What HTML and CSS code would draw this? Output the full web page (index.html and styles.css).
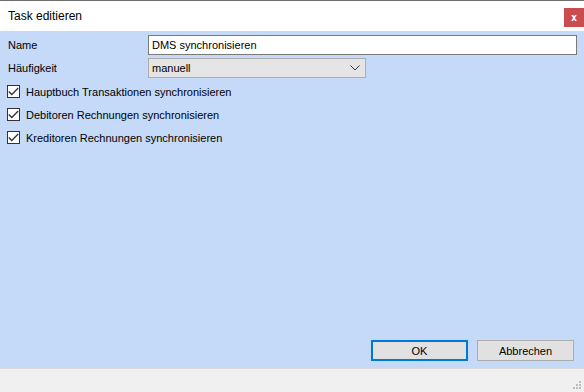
FILE: index.html
```html
<!DOCTYPE html>
<html lang="de">
<head>
    <meta charset="UTF-8">
    <title>Task editieren</title>
    <link rel="stylesheet" href="styles.css">
</head>
<body>
    <div class="window">
        <div class="titlebar">
            <span class="title">Task editieren</span>
            <button class="close">x</button>
        </div>
        <div class="content">
            <div class="row">
                <label class="label" for="name">Name</label>
                <input class="textbox" type="text" id="name" value="DMS synchronisieren">
            </div>
            <div class="row">
                <label class="label" for="freq">Häufigkeit</label>
                <div class="combo" id="freq">
                    <span>manuell</span>
                    <svg class="chevron" width="10" height="6" viewBox="0 0 10 6"><path d="M0.5 0.5 L5 5 L9.5 0.5" fill="none" stroke="#333" stroke-width="1"/></svg>
                </div>
            </div>
            <div class="check-row">
                <span class="checkbox"><svg width="11" height="9" viewBox="0 0 11 9"><path d="M0.8 4.5 L3.8 7.5 L10.2 1" fill="none" stroke="#333" stroke-width="1.3"/></svg></span>
                <span>Hauptbuch Transaktionen synchronisieren</span>
            </div>
            <div class="check-row">
                <span class="checkbox"><svg width="11" height="9" viewBox="0 0 11 9"><path d="M0.8 4.5 L3.8 7.5 L10.2 1" fill="none" stroke="#333" stroke-width="1.3"/></svg></span>
                <span>Debitoren Rechnungen synchronisieren</span>
            </div>
            <div class="check-row">
                <span class="checkbox"><svg width="11" height="9" viewBox="0 0 11 9"><path d="M0.8 4.5 L3.8 7.5 L10.2 1" fill="none" stroke="#333" stroke-width="1.3"/></svg></span>
                <span>Kreditoren Rechnungen synchronisieren</span>
            </div>
            <div class="buttons">
                <button class="btn btn-default">OK</button>
                <button class="btn">Abbrechen</button>
            </div>
        </div>
        <div class="statusbar">
            <svg class="grip" width="10" height="10" viewBox="0 0 10 10" fill="#bdbdbd">
                <rect x="7" y="1" width="2" height="2"/>
                <rect x="4" y="4" width="2" height="2"/><rect x="7" y="4" width="2" height="2"/>
                <rect x="1" y="7" width="2" height="2"/><rect x="4" y="7" width="2" height="2"/><rect x="7" y="7" width="2" height="2"/>
            </svg>
        </div>
    </div>
</body>
</html>
```

FILE: styles.css
```css
body {
    margin: 0;
    font-family: "Liberation Sans", Arial, sans-serif;
    font-size: 11px;
    color: #000;
}
.window {
    width: 584px;
    height: 392px;
    display: flex;
    flex-direction: column;
    box-sizing: border-box;
    border-top: 1px solid #6e6e6e;
}
.titlebar {
    height: 30px;
    background: #fff;
    display: flex;
    align-items: flex-start;
    justify-content: space-between;
}
.title {
    padding: 8px 0 0 8px;
    font-size: 12px;
}
.close {
    margin-top: 7px;
    width: 20px;
    height: 19px;
    padding: 0;
    border: none;
    background: #c94c4e;
    color: #fff;
    font-family: "DejaVu Sans Mono", monospace;
    font-weight: bold;
    font-size: 10px;
    line-height: 17px;
}
.content {
    flex: 1;
    background: #c4daf8;
    display: flex;
    flex-direction: column;
    padding: 4px 7px 0 8px;
}
.row {
    display: flex;
    align-items: center;
    height: 20px;
    margin-bottom: 3px;
}
.label {
    width: 140px;
}
.textbox {
    width: 429px;
    height: 20px;
    box-sizing: border-box;
    border: 1px solid #7a7a7a;
    padding: 0 3px;
    font: inherit;
    margin: 0;
}
.combo {
    width: 218px;
    height: 20px;
    box-sizing: border-box;
    border: 1px solid #adadad;
    background: #e5e5e5;
    display: flex;
    align-items: center;
    justify-content: space-between;
    padding: 0 5px 0 3px;
}
.check-row {
    display: flex;
    align-items: center;
    height: 23px;
    margin-left: -1px;
    margin-top: -1px;
    margin-bottom: 1px;
}
.checkbox {
    width: 13px;
    height: 13px;
    box-sizing: border-box;
    border: 1px solid #333;
    background: #fff;
    display: flex;
    align-items: center;
    justify-content: center;
    margin-right: 6px;
}
.buttons {
    margin-top: auto;
    margin-bottom: 7px;
    display: flex;
    justify-content: flex-end;
    gap: 9px;
    padding-right: 3px;
}
.btn {
    width: 97px;
    height: 21px;
    box-sizing: border-box;
    background: #e1e1e1;
    border: 1px solid #adadad;
    font: inherit;
    padding: 0;
}
.btn-default {
    border: 2px solid #0078d7;
}
.statusbar {
    height: 21px;
    background: #f0f0f0;
    border-top: 1px solid #dadada;
    display: flex;
    justify-content: flex-end;
    align-items: flex-end;
    padding: 0 2px 2px 0;
}
```
